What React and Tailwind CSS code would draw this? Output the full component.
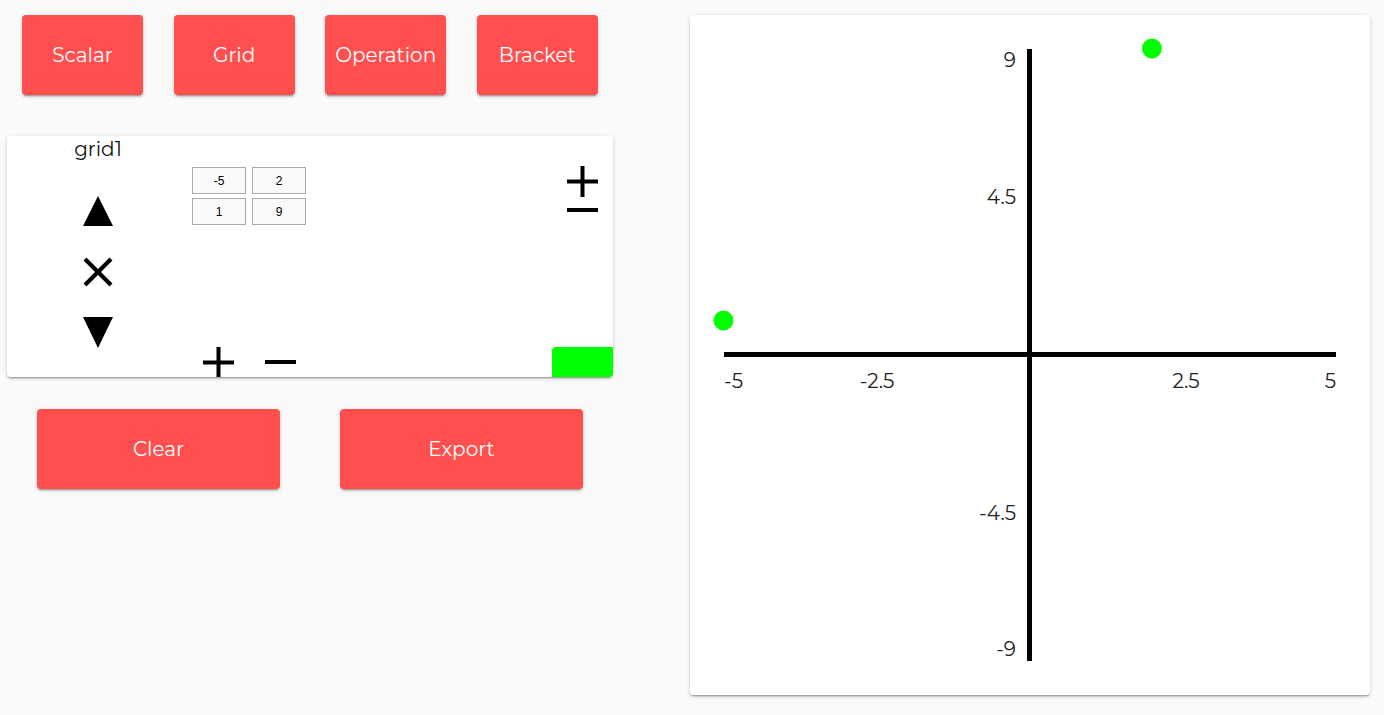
import React from "react";

const shadow = "shadow-[0px_3px_1px_-2px_rgba(0,0,0,0.2),0px_2px_2px_0px_rgba(0,0,0,0.14),0px_1px_5px_0px_rgba(0,0,0,0.12)]";
const font = "font-['Montserrat','Open_Sans','Noto_Sans',sans-serif]";

function Btn({ children, w }) {
  return (
    <button className={`${w} h-[80px] bg-[#ff4f4f] text-white text-[20px] rounded-[4px] ${shadow} flex items-center justify-center`}>
      {children}
    </button>
  );
}

function Plus() {
  return (
    <svg width="31" height="31" viewBox="0 0 31 31">
      <rect x="0" y="13.5" width="31" height="4" fill="#000" />
      <rect x="13.5" y="0" width="4" height="31" fill="#000" />
    </svg>
  );
}
function Minus() {
  return (
    <svg width="31" height="4" viewBox="0 0 31 4">
      <rect x="0" y="0" width="31" height="4" fill="#000" />
    </svg>
  );
}

function Cell({ v }) {
  return (
    <div className="w-[54px] h-[27px] bg-[#fafafa] border border-[#aaaaaa] flex items-center justify-center text-[12px] text-black font-['Liberation_Sans',Arial,sans-serif]">
      {v}
    </div>
  );
}

function Chart() {
  const ox = 339.5, oy = 339.5;
  const sx = 61.2, sy = 34;
  const pts = [[-5, 1], [2, 9]];
  const lab = "fill-[#222] text-[20px]";
  return (
    <svg width="680" height="680" viewBox="0 0 680 680" className={font}>
      <line x1={34} y1={oy} x2={646} y2={oy} stroke="#000" strokeWidth="5" />
      <line x1={ox} y1={34} x2={ox} y2={646} stroke="#000" strokeWidth="5" />
      <text x={34} y={373} className={lab}>-5</text>
      <text x={187} y={373} textAnchor="middle" className={lab}>-2.5</text>
      <text x={496} y={373} textAnchor="middle" className={lab}>2.5</text>
      <text x={646} y={373} textAnchor="end" className={lab}>5</text>
      <text x={326} y={52} textAnchor="end" className={lab}>9</text>
      <text x={326} y={189} textAnchor="end" className={lab}>4.5</text>
      <text x={326} y={505} textAnchor="end" className={lab}>-4.5</text>
      <text x={326} y={641} textAnchor="end" className={lab}>-9</text>
      {pts.map(([x, y], i) => (
        <circle key={i} cx={ox + x * sx} cy={oy - y * sy} r="10" fill="#00ff00" />
      ))}
    </svg>
  );
}

export default function App() {
  return (
    <div className={`min-h-[715px] w-full bg-[#fafafa] flex ${font} text-[#222]`}>
      <div className="w-[620px] flex flex-col pl-[7px]">
        <div className="flex gap-[30.6px] pl-[15px] pt-[15px]">
          <Btn w="w-[121px]">Scalar</Btn>
          <Btn w="w-[121px]">Grid</Btn>
          <Btn w="w-[121px]">Operation</Btn>
          <Btn w="w-[121px]">Bracket</Btn>
        </div>
        <div className={`mt-[41px] w-[606px] h-[241px] bg-white rounded-[4px] ${shadow} flex overflow-hidden`}>
          <div className="w-[182px] flex flex-col items-center">
            <div className="text-[20px] leading-[24px] mt-[1px] text-[#111]">grid1</div>
            <svg width="30" height="30" viewBox="0 0 30 30" className="mt-[35px]">
              <polygon points="15,0 30,30 0,30" fill="#000" />
            </svg>
            <svg width="30" height="30" viewBox="0 0 30 30" className="mt-[31px]">
              <line x1="2" y1="2" x2="28" y2="28" stroke="#000" strokeWidth="4" />
              <line x1="28" y1="2" x2="2" y2="28" stroke="#000" strokeWidth="4" />
            </svg>
            <svg width="30" height="31" viewBox="0 0 30 31" className="mt-[30px]">
              <polygon points="0,0 30,0 15,31" fill="#000" />
            </svg>
          </div>
          <div className="flex-1 flex flex-col justify-between">
            <div className="grid grid-cols-[54px_54px] gap-x-[6px] gap-y-[4px] mt-[31px] ml-[3px]">
              <Cell v="-5" />
              <Cell v="2" />
              <Cell v="1" />
              <Cell v="9" />
            </div>
            <div className="flex items-center gap-[31px] ml-[14px] h-[30px]">
              <Plus />
              <Minus />
            </div>
          </div>
          <div className="w-[61px] flex flex-col items-center justify-between">
            <div className="flex flex-col items-center mt-[30px] pr-[1px] gap-[11px]">
              <Plus />
              <Minus />
            </div>
            <div className="w-[61px] h-[30px] bg-[#00ff00] rounded-tl-[4px]" />
          </div>
        </div>
        <div className="w-[606px] flex justify-around mt-[32px]">
          <Btn w="w-[243px]">Clear</Btn>
          <Btn w="w-[243px]">Export</Btn>
        </div>
      </div>
      <div className="pl-[70px] pt-[15px]">
        <div className={`w-[680px] h-[680px] bg-white rounded-[4px] ${shadow}`}>
          <Chart />
        </div>
      </div>
    </div>
  );
}
